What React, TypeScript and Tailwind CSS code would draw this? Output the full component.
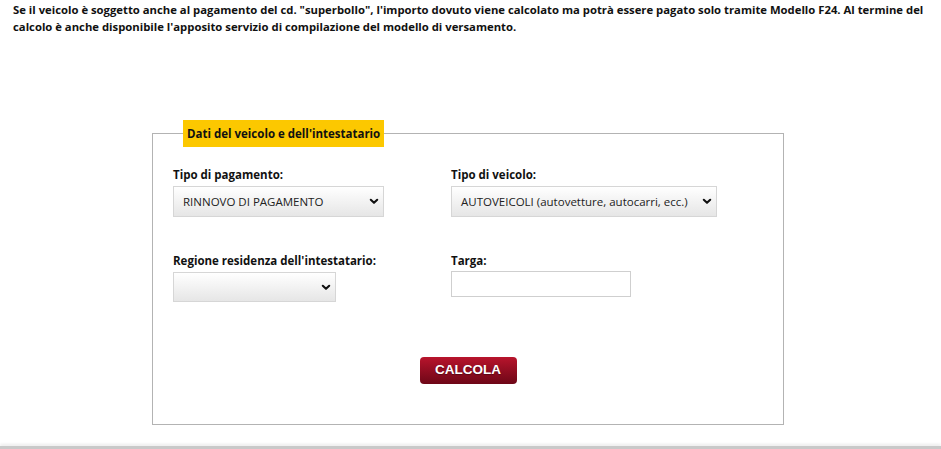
import React from "react";

function Chevron() {
  return (
    <svg width="10" height="7" viewBox="0 0 10 7" className="shrink-0">
      <path d="M1.8 1.8 L5 4.8 L8.2 1.8" fill="none" stroke="#111" strokeWidth="2.1" strokeLinecap="round" strokeLinejoin="round" />
    </svg>
  );
}

function FakeSelect({ value, className }: { value: string; className: string }) {
  return (
    <div
      className={`flex items-center justify-between border border-[#d6d6d6] bg-gradient-to-b from-white to-[#e6e6e6] pl-[9px] pr-[4px] text-[11.5px] text-[#222] ${className}`}
    >
      <span className="whitespace-nowrap">{value}</span>
      <Chevron />
    </div>
  );
}

export default function App() {
  return (
    <div
      className="relative flex h-[449px] w-[941px] flex-col bg-white text-[#111]"
      style={{ fontFamily: '"Open Sans", "Noto Sans", sans-serif' }}
    >
      <p className="whitespace-nowrap pl-[13px] pt-[1px] text-[11.3px] font-bold leading-[17px] text-[#111]">
        Se il veicolo è soggetto anche al pagamento del cd. "superbollo", l'importo dovuto viene calcolato ma potrà essere pagato solo tramite Modello F24. Al termine del
        <br />
        calcolo è anche disponibile l'apposito servizio di compilazione del modello di versamento.
      </p>

      <fieldset className="ml-[152px] mt-[85px] w-[632px] border border-[#b3b3b3] pl-[20px] pr-[20px] pb-[40px]">
        <legend className="ml-[10px] bg-[#fcc800] px-[4px] py-[6px] text-[11.5px] font-bold leading-[15px] text-[#111]">
          Dati del veicolo e dell'intestatario
        </legend>

        <div className="mt-[20px] grid grid-cols-[278px_1fr]">
          <div>
            <div className="text-[11.5px] font-bold leading-[16px]">Tipo di pagamento:</div>
            <FakeSelect value="RINNOVO DI PAGAMENTO" className="mt-[3px] h-[31px] w-[211px]" />
          </div>
          <div>
            <div className="text-[11.5px] font-bold leading-[16px]">Tipo di veicolo:</div>
            <FakeSelect value="AUTOVEICOLI (autovetture, autocarri, ecc.)" className="mt-[3px] h-[31px] w-[266px]" />
          </div>
        </div>

        <div className="mt-[36px] grid grid-cols-[278px_1fr]">
          <div>
            <div className="text-[11.5px] font-bold leading-[16px]">Regione residenza dell'intestatario:</div>
            <FakeSelect value="" className="mt-[3px] h-[30px] w-[163px]" />
          </div>
          <div>
            <div className="text-[11.5px] font-bold leading-[16px]">Targa:</div>
            <div className="mt-[2px] h-[26px] w-[180px] border border-[#cfcfcf] bg-white" />
          </div>
        </div>

        <div className="mt-[55px] flex justify-center">
          <button
            className="h-[27px] w-[97px] rounded-[4px] bg-gradient-to-b from-[#b8142c] to-[#6e0717] text-[13.5px] font-bold text-white [text-shadow:0_1px_1px_rgba(0,0,0,0.35)]"
            style={{ fontFamily: '"Liberation Sans", Arial, sans-serif' }}
          >
            CALCOLA
          </button>
        </div>
      </fieldset>

      <div className="mt-auto h-[3px] w-full bg-[#c9c9c9] shadow-[0_-2px_3px_rgba(0,0,0,0.08)]" />
    </div>
  );
}
